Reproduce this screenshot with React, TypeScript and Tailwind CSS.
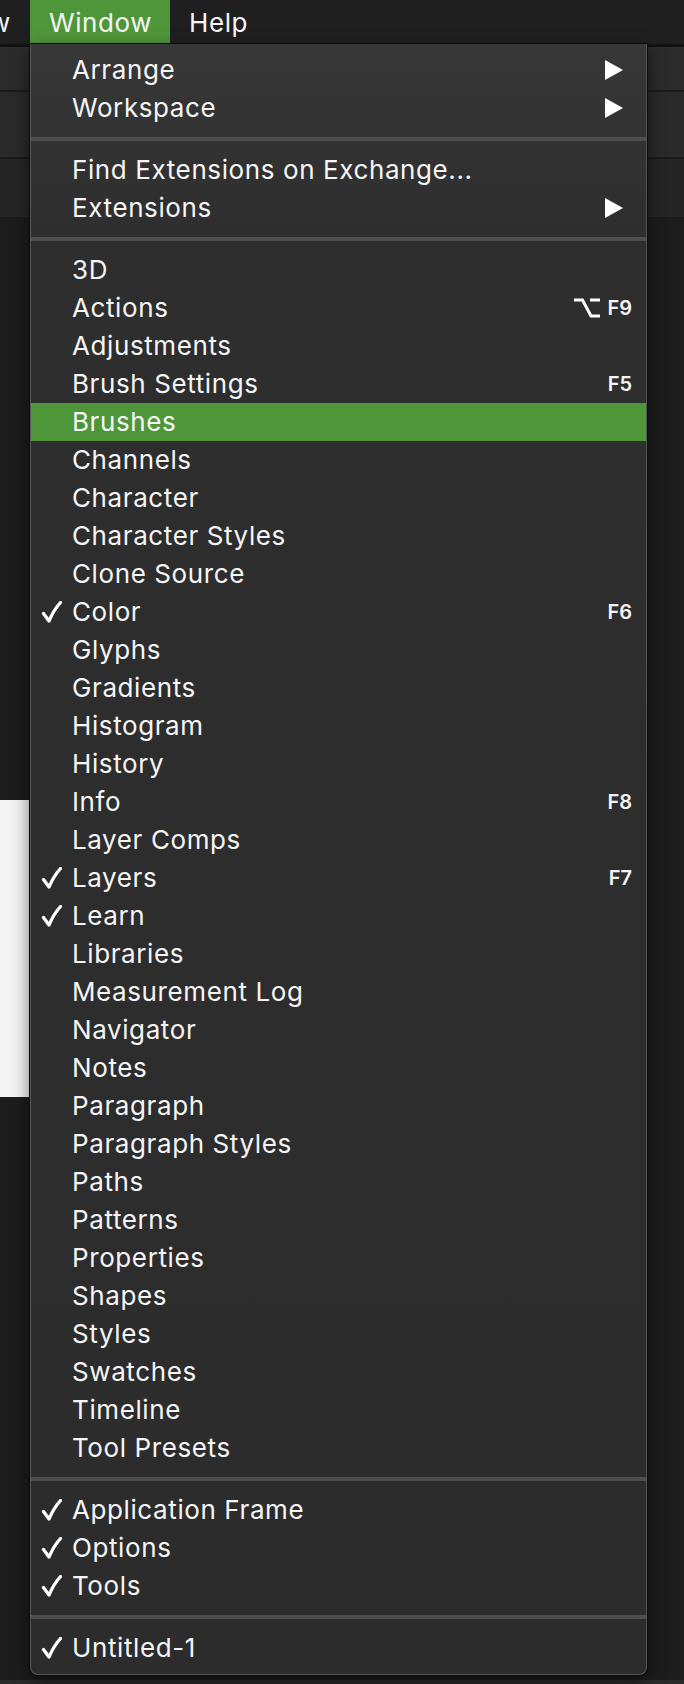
import React from "react";

type Item = {
  label: string;
  check?: boolean;
  shortcut?: string;
  option?: boolean;
  submenu?: boolean;
  active?: boolean;
};

const groups: Item[][] = [
  [
    { label: "Arrange", submenu: true },
    { label: "Workspace", submenu: true },
  ],
  [
    { label: "Find Extensions on Exchange..." },
    { label: "Extensions", submenu: true },
  ],
  [
    { label: "3D" },
    { label: "Actions", shortcut: "F9", option: true },
    { label: "Adjustments" },
    { label: "Brush Settings", shortcut: "F5" },
    { label: "Brushes", active: true },
    { label: "Channels" },
    { label: "Character" },
    { label: "Character Styles" },
    { label: "Clone Source" },
    { label: "Color", check: true, shortcut: "F6" },
    { label: "Glyphs" },
    { label: "Gradients" },
    { label: "Histogram" },
    { label: "History" },
    { label: "Info", shortcut: "F8" },
    { label: "Layer Comps" },
    { label: "Layers", check: true, shortcut: "F7" },
    { label: "Learn", check: true },
    { label: "Libraries" },
    { label: "Measurement Log" },
    { label: "Navigator" },
    { label: "Notes" },
    { label: "Paragraph" },
    { label: "Paragraph Styles" },
    { label: "Paths" },
    { label: "Patterns" },
    { label: "Properties" },
    { label: "Shapes" },
    { label: "Styles" },
    { label: "Swatches" },
    { label: "Timeline" },
    { label: "Tool Presets" },
  ],
  [
    { label: "Application Frame", check: true },
    { label: "Options", check: true },
    { label: "Tools", check: true },
  ],
  [{ label: "Untitled-1", check: true }],
];

function CheckMark() {
  return (
    <svg width="21" height="22" viewBox="0 0 21 22" className="block">
      <path
        d="M2.5 12.5 L8 20 C11 13 14.5 7 19.5 1.5"
        fill="none"
        stroke="white"
        strokeWidth="3.3"
        strokeLinecap="round"
        strokeLinejoin="round"
      />
    </svg>
  );
}

function OptionKey() {
  return (
    <svg width="26" height="20" viewBox="0 0 26 20" className="block">
      <path
        d="M0 2 H8.5 L17 18 H26 M16 2 H26"
        fill="none"
        stroke="white"
        strokeWidth="3"
      />
    </svg>
  );
}

function SubArrow() {
  return (
    <svg width="18" height="20" viewBox="0 0 18 20" className="block mr-[9px]">
      <path d="M0 0 L18 10 L0 20 Z" fill="white" />
    </svg>
  );
}

function MenuRow({ item }: { item: Item }) {
  return (
    <div
      className={`flex h-[38px] items-center pl-[10px] pr-[14px] ${
        item.active ? "bg-[#4f963a]" : ""
      }`}
    >
      <div className="w-[31px] shrink-0">{item.check && <CheckMark />}</div>
      <span className="flex-1 text-[26px] leading-none tracking-[0.6px] text-[#f5f5f5]">
        {item.label}
      </span>
      {item.shortcut && (
        <div className="flex items-center gap-[7px]">
          {item.option && <OptionKey />}
          <span className="text-[20px] font-semibold leading-none text-[#f5f5f5]">
            {item.shortcut}
          </span>
        </div>
      )}
      {item.submenu && <SubArrow />}
    </div>
  );
}

export default function App() {
  return (
    <div className="relative h-[1684px] w-[684px] overflow-hidden bg-[#1c1c1c] font-[Inter,'Liberation_Sans',sans-serif]">
      {/* Menu bar */}
      <div className="flex h-[44px] items-center bg-[#1f1f1f] text-[26px] tracking-[0.6px] text-[#f5f5f5]">
        <div className="flex h-full w-[30px] items-center justify-end overflow-hidden">
          <span className="shrink-0 pr-[19px]">View</span>
        </div>
        <div className="flex h-full w-[140px] items-center bg-[#4f963a] px-[19px]">
          Window
        </div>
        <div className="px-[19px]">Help</div>
      </div>

      {/* Toolbars behind the menu */}
      <div className="h-[3px] bg-[#121212]" />
      <div className="h-[43px] bg-[#2b2b2b]" />
      <div className="h-[2px] bg-[#1b1b1b]" />
      <div className="h-[65px] bg-[#2a2a2a]" />
      <div className="h-[2px] bg-[#1b1b1b]" />
      <div className="h-[58px] bg-[#252525]" />

      {/* Document canvas peeking at left */}
      <div className="mt-[583px] h-[297px] w-[30px] bg-[#f4f4f4]" />
      <div className="absolute bottom-0 left-0 h-[4px] w-full bg-[#2a2a2a]" />

      {/* Window dropdown */}
      <div className="absolute left-[30px] top-[44px] w-[617px] rounded-b-[8px] border border-t-0 border-[#585858] bg-gradient-to-b from-[#373737] via-[#2e2e2e] via-[12%] to-[#2c2c2c] pt-[7px] pb-[7px] shadow-[0_0_0_1px_#0c0c0c,0_6px_18px_rgba(0,0,0,0.55)]">
        {groups.map((group, gi) => (
          <div key={gi}>
            {gi > 0 && <div className="my-[10px] h-[4px] bg-[#4e4e4e]" />}
            {group.map((item) => (
              <MenuRow key={item.label} item={item} />
            ))}
          </div>
        ))}
      </div>
    </div>
  );
}
